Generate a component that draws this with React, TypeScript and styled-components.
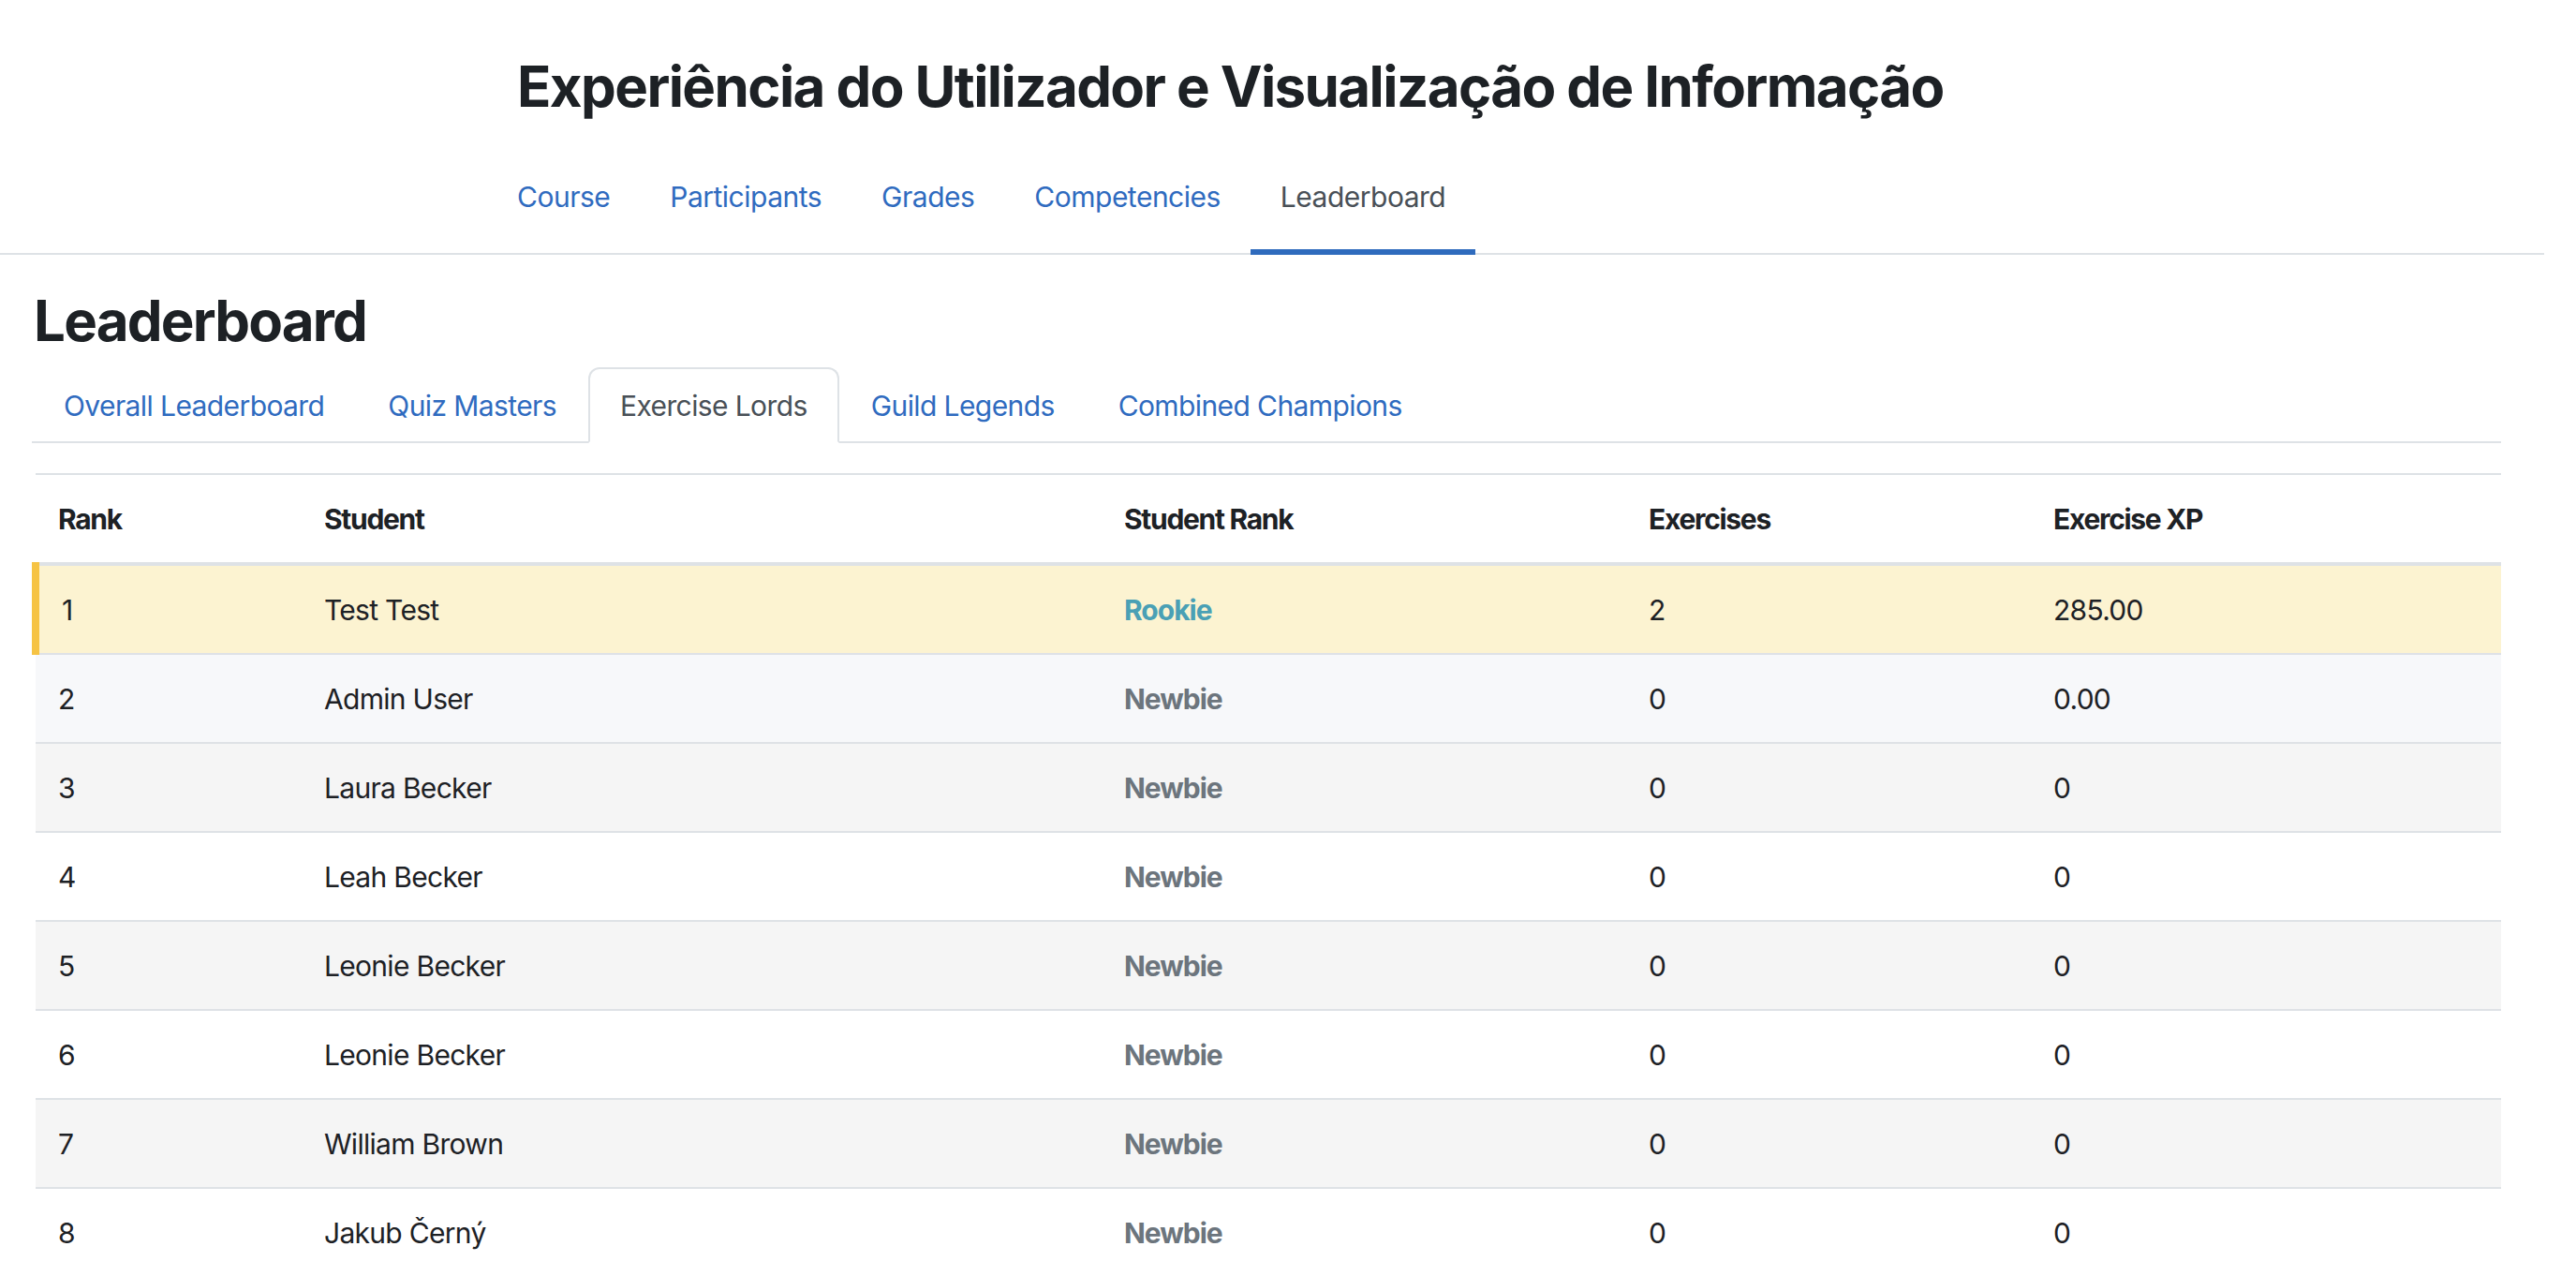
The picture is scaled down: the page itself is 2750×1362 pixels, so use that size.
import React from "react";
import styled, { createGlobalStyle } from "styled-components";

const GlobalStyle = createGlobalStyle`
  html, body {
    margin: 0;
    padding: 0;
    background: #ffffff;
  }
  body {
    font-family: Inter, "Noto Sans", "Liberation Sans", sans-serif;
    color: #1d2125;
    font-size: 30px;
    line-height: 1.5;
  }
  * { box-sizing: border-box; }
`;

const Page = styled.div`
  width: 2750px;
  min-height: 1362px;
  overflow: hidden;
`;

const Header = styled.header`
  margin-right: 34px;
  padding: 56px 0 0 552px;
  border-bottom: 2px solid #dee2e6;
`;

const CourseTitle = styled.h1`
  margin: 0 0 44px;
  font-size: 60px;
  line-height: 72px;
  font-weight: 700;
  letter-spacing: -1.6px;
  color: #1d2125;
`;

const SecondaryNav = styled.nav`
  display: flex;
  margin: 0 0 -2px -32px;
`;

const NavLink = styled.a<{ $active?: boolean }>`
  display: block;
  padding: 16px 32px 33px;
  font-size: 30px;
  line-height: 45px;
  letter-spacing: -0.5px;
  text-decoration: none;
  color: ${(p) => (p.$active ? "#495057" : "#2f6bbf")};
  border-bottom: 6px solid ${(p) => (p.$active ? "#2f6bbd" : "transparent")};
`;

const Main = styled.main`
  padding: 0 80px 0 34px;
`;

const PageHeading = styled.h2`
  margin: 34px 0 14px 2px;
  font-size: 60px;
  line-height: 72px;
  font-weight: 700;
  letter-spacing: -1.8px;
  color: #1d2125;
`;

const TabList = styled.ul`
  display: flex;
  margin: 0;
  padding: 0;
  list-style: none;
  border-bottom: 2px solid #dee2e6;
`;

const Tab = styled.li<{ $active?: boolean }>`
  margin-bottom: -2px;
  padding: 17px 32px 15px;
  font-size: 30px;
  line-height: 45px;
  letter-spacing: -0.6px;
  border: 2px solid transparent;
  border-radius: 12px 12px 0 0;
  color: ${(p) => (p.$active ? "#495057" : "#2f6bbf")};
  background: ${(p) => (p.$active ? "#ffffff" : "transparent")};
  border-color: ${(p) =>
    p.$active ? "#dee2e6 #dee2e6 #ffffff" : "transparent"};
`;

const TableWrap = styled.div`
  margin-top: 32px;
`;

const Table = styled.table`
  width: 100%;
  border-collapse: collapse;
  table-layout: fixed;
`;

const Col = styled.col<{ $w: number }>`
  width: ${(p) => p.$w}px;
`;

const HeadCell = styled.th`
  padding: 25px 24px 23px;
  text-align: left;
  vertical-align: bottom;
  font-size: 30px;
  line-height: 45px;
  font-weight: 700;
  letter-spacing: -1.3px;
  color: #1d2125;
  border-top: 2px solid #dee2e6;
  border-bottom: 4px solid #dee2e6;
`;

const Row = styled.tr<{ $bg: string }>`
  background: ${(p) => p.$bg};
`;

const Cell = styled.td<{ $marker?: boolean }>`
  padding: 25px 24px 23px;
  font-size: 30px;
  line-height: 45px;
  letter-spacing: -0.7px;
  color: #1d2125;
  border-top: 2px solid #dee2e6;
  border-left: ${(p) => (p.$marker ? "8px solid #f6c344" : "0 none")};
`;

const RankLabel = styled.span<{ $tone: "rookie" | "newbie" }>`
  font-weight: 700;
  letter-spacing: -1px;
  color: ${(p) => (p.$tone === "rookie" ? "#4aa0b5" : "#6c757d")};
`;

type Entry = {
  rank: number;
  name: string;
  label: "Rookie" | "Newbie";
  exercises: number;
  xp: string;
};

const entries: Entry[] = [
  { rank: 1, name: "Test Test", label: "Rookie", exercises: 2, xp: "285.00" },
  { rank: 2, name: "Admin User", label: "Newbie", exercises: 0, xp: "0.00" },
  { rank: 3, name: "Laura Becker", label: "Newbie", exercises: 0, xp: "0" },
  { rank: 4, name: "Leah Becker", label: "Newbie", exercises: 0, xp: "0" },
  { rank: 5, name: "Leonie Becker", label: "Newbie", exercises: 0, xp: "0" },
  { rank: 6, name: "Leonie Becker", label: "Newbie", exercises: 0, xp: "0" },
  { rank: 7, name: "William Brown", label: "Newbie", exercises: 0, xp: "0" },
  { rank: 8, name: "Jakub Černý", label: "Newbie", exercises: 0, xp: "0" },
];

const rowBackground = (rank: number) => {
  if (rank === 1) return "#fcf3d1";
  if (rank === 2) return "#f7f8fa";
  return rank % 2 === 1 ? "#f5f5f5" : "#ffffff";
};

const navItems = ["Course", "Participants", "Grades", "Competencies", "Leaderboard"];
const tabs = [
  "Overall Leaderboard",
  "Quiz Masters",
  "Exercise Lords",
  "Guild Legends",
  "Combined Champions",
];

export default function App() {
  return (
    <Page>
      <GlobalStyle />
      <Header>
        <CourseTitle>Experiência do Utilizador e Visualização de Informação</CourseTitle>
        <SecondaryNav>
          {navItems.map((item) => (
            <NavLink key={item} href="#" $active={item === "Leaderboard"}>
              {item}
            </NavLink>
          ))}
        </SecondaryNav>
      </Header>
      <Main>
        <PageHeading>Leaderboard</PageHeading>
        <TabList>
          {tabs.map((t) => (
            <Tab key={t} $active={t === "Exercise Lords"}>
              {t}
            </Tab>
          ))}
        </TabList>
        <TableWrap>
          <Table>
            <colgroup>
              <Col $w={284} />
              <Col $w={854} />
              <Col $w={560} />
              <Col $w={432} />
              <Col $w={502} />
            </colgroup>
            <thead>
              <tr>
                <HeadCell>Rank</HeadCell>
                <HeadCell>Student</HeadCell>
                <HeadCell>Student Rank</HeadCell>
                <HeadCell>Exercises</HeadCell>
                <HeadCell>Exercise XP</HeadCell>
              </tr>
            </thead>
            <tbody>
              {entries.map((e) => (
                <Row key={e.rank} $bg={rowBackground(e.rank)}>
                  <Cell $marker={e.rank === 1}>{e.rank}</Cell>
                  <Cell>{e.name}</Cell>
                  <Cell>
                    <RankLabel $tone={e.label === "Rookie" ? "rookie" : "newbie"}>
                      {e.label}
                    </RankLabel>
                  </Cell>
                  <Cell>{e.exercises}</Cell>
                  <Cell>{e.xp}</Cell>
                </Row>
              ))}
            </tbody>
          </Table>
        </TableWrap>
      </Main>
    </Page>
  );
}
